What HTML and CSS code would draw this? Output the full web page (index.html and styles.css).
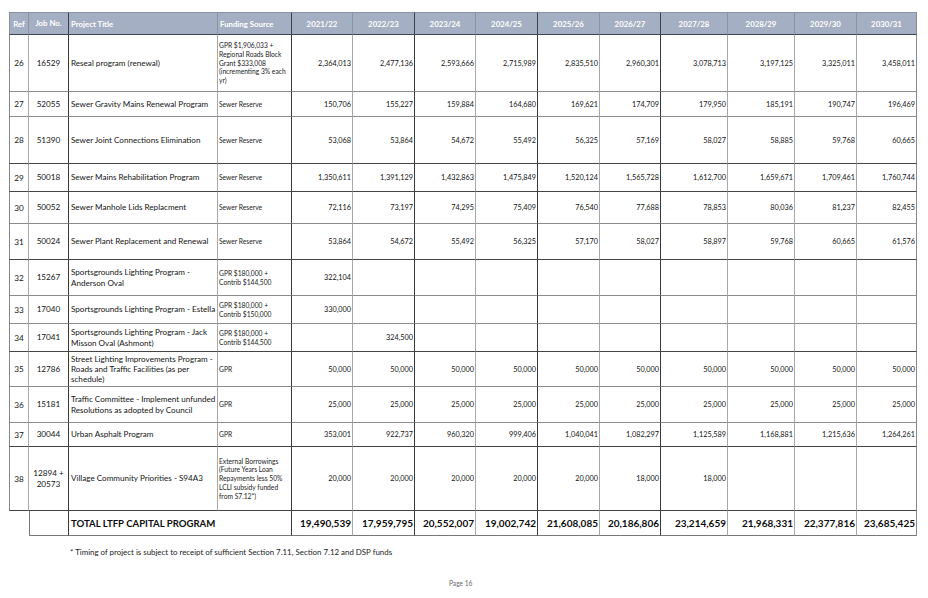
FILE: index.html
```html
<!DOCTYPE html>
<html>
<head>
<meta charset="utf-8">
<link rel="stylesheet" href="styles.css">
</head>
<body>
<div class="page">
<table class="ltfp">
<colgroup>
<col class="c-ref"><col class="c-job"><col class="c-title"><col class="c-fund">
<col class="c-y61"><col class="c-y62"><col class="c-y61"><col class="c-y62"><col class="c-y62"><col class="c-y61"><col class="c-y67"><col class="c-y67"><col class="c-y62"><col class="c-y60">
</colgroup>
<thead>
<tr class="hd">
<th class="ref">Ref</th><th class="job vd">Job No.</th><th class="tl">Project Title</th><th class="tl vd">Funding Source</th>
<th>2021/22</th><th class="vd">2022/23</th><th>2023/24</th><th class="vd">2024/25</th><th>2025/26</th><th class="vd">2026/27</th><th>2027/28</th><th>2028/29</th><th>2029/30</th><th class="last">2030/31</th>
</tr>
</thead>
<tbody>
<tr class="r26">
<td class="ref">26</td><td class="job vd">16529</td><td class="title">Reseal program (renewal)</td><td class="fund vd">GPR $1,906,033 + Regional Roads Block Grant $333,008 (incrementing 3% each yr)</td>
<td class="num">2,364,013</td><td class="num vd">2,477,136</td><td class="num">2,593,666</td><td class="num vd">2,715,989</td><td class="num">2,835,510</td><td class="num vd">2,960,301</td><td class="num">3,078,713</td><td class="num">3,197,125</td><td class="num">3,325,011</td><td class="num last">3,458,011</td>
</tr>
<tr class="r27">
<td class="ref">27</td><td class="job vd">52055</td><td class="title">Sewer Gravity Mains Renewal Program</td><td class="fund vd">Sewer Reserve</td>
<td class="num">150,706</td><td class="num vd">155,227</td><td class="num">159,884</td><td class="num vd">164,680</td><td class="num">169,621</td><td class="num vd">174,709</td><td class="num">179,950</td><td class="num">185,191</td><td class="num">190,747</td><td class="num last">196,469</td>
</tr>
<tr class="r28 dk">
<td class="ref">28</td><td class="job vd">51390</td><td class="title">Sewer Joint Connections Elimination</td><td class="fund vd">Sewer Reserve</td>
<td class="num">53,068</td><td class="num vd">53,864</td><td class="num">54,672</td><td class="num vd">55,492</td><td class="num">56,325</td><td class="num vd">57,169</td><td class="num">58,027</td><td class="num">58,885</td><td class="num">59,768</td><td class="num last">60,665</td>
</tr>
<tr class="r29 dk">
<td class="ref">29</td><td class="job vd">50018</td><td class="title">Sewer Mains Rehabilitation Program</td><td class="fund vd">Sewer Reserve</td>
<td class="num">1,350,611</td><td class="num vd">1,391,129</td><td class="num">1,432,863</td><td class="num vd">1,475,849</td><td class="num">1,520,124</td><td class="num vd">1,565,728</td><td class="num">1,612,700</td><td class="num">1,659,671</td><td class="num">1,709,461</td><td class="num last">1,760,744</td>
</tr>
<tr class="r30">
<td class="ref">30</td><td class="job vd">50052</td><td class="title">Sewer Manhole Lids Replacment</td><td class="fund vd">Sewer Reserve</td>
<td class="num">72,116</td><td class="num vd">73,197</td><td class="num">74,295</td><td class="num vd">75,409</td><td class="num">76,540</td><td class="num vd">77,688</td><td class="num">78,853</td><td class="num">80,036</td><td class="num">81,237</td><td class="num last">82,455</td>
</tr>
<tr class="r31 dk">
<td class="ref">31</td><td class="job vd">50024</td><td class="title">Sewer Plant Replacement and Renewal</td><td class="fund vd">Sewer Reserve</td>
<td class="num">53,864</td><td class="num vd">54,672</td><td class="num">55,492</td><td class="num vd">56,325</td><td class="num">57,170</td><td class="num vd">58,027</td><td class="num">58,897</td><td class="num">59,768</td><td class="num">60,665</td><td class="num last">61,576</td>
</tr>
<tr class="r32">
<td class="ref">32</td><td class="job vd">15267</td><td class="title">Sportsgrounds Lighting Program - Anderson Oval</td><td class="fund vd">GPR $180,000 + Contrib $144,500</td>
<td class="num">322,104</td><td class="num vd"></td><td class="num"></td><td class="num vd"></td><td class="num"></td><td class="num vd"></td><td class="num"></td><td class="num"></td><td class="num"></td><td class="num last"></td>
</tr>
<tr class="r33">
<td class="ref">33</td><td class="job vd">17040</td><td class="title">Sportsgrounds Lighting Program - Estella</td><td class="fund vd">GPR $180,000 + Contrib $150,000</td>
<td class="num">330,000</td><td class="num vd"></td><td class="num"></td><td class="num vd"></td><td class="num"></td><td class="num vd"></td><td class="num"></td><td class="num"></td><td class="num"></td><td class="num last"></td>
</tr>
<tr class="r34 dk">
<td class="ref">34</td><td class="job vd">17041</td><td class="title">Sportsgrounds Lighting Program - Jack Misson Oval (Ashmont)</td><td class="fund vd">GPR $180,000 + Contrib $144,500</td>
<td class="num"></td><td class="num vd">324,500</td><td class="num"></td><td class="num vd"></td><td class="num"></td><td class="num vd"></td><td class="num"></td><td class="num"></td><td class="num"></td><td class="num last"></td>
</tr>
<tr class="r35">
<td class="ref">35</td><td class="job vd">12786</td><td class="title">Street Lighting Improvements Program - Roads and Traffic Facilities (as per schedule)</td><td class="fund vd">GPR</td>
<td class="num">50,000</td><td class="num vd">50,000</td><td class="num">50,000</td><td class="num vd">50,000</td><td class="num">50,000</td><td class="num vd">50,000</td><td class="num">50,000</td><td class="num">50,000</td><td class="num">50,000</td><td class="num last">50,000</td>
</tr>
<tr class="r36">
<td class="ref">36</td><td class="job vd">15181</td><td class="title">Traffic Committee - Implement unfunded Resolutions as adopted by Council</td><td class="fund vd">GPR</td>
<td class="num">25,000</td><td class="num vd">25,000</td><td class="num">25,000</td><td class="num vd">25,000</td><td class="num">25,000</td><td class="num vd">25,000</td><td class="num">25,000</td><td class="num">25,000</td><td class="num">25,000</td><td class="num last">25,000</td>
</tr>
<tr class="r37 dk">
<td class="ref">37</td><td class="job vd">30044</td><td class="title">Urban Asphalt Program</td><td class="fund vd">GPR</td>
<td class="num">353,001</td><td class="num vd">922,737</td><td class="num">960,320</td><td class="num vd">999,406</td><td class="num">1,040,041</td><td class="num vd">1,082,297</td><td class="num">1,125,589</td><td class="num">1,168,881</td><td class="num">1,215,636</td><td class="num last">1,264,261</td>
</tr>
<tr class="r38 dk">
<td class="ref">38</td><td class="job vd">12894 +<br>20573</td><td class="title">Village Community Priorities - S94A3</td><td class="fund vd">External Borrowings (Future Years Loan Repayments less 50% LCLI subsidy funded from S7.12*)</td>
<td class="num">20,000</td><td class="num vd">20,000</td><td class="num">20,000</td><td class="num vd">20,000</td><td class="num">20,000</td><td class="num vd">18,000</td><td class="num">18,000</td><td class="num"></td><td class="num"></td><td class="num last"></td>
</tr>
<tr class="total">
<td class="blank"></td><td class="job vd first"></td><td class="ttl-label" colspan="2">TOTAL LTFP CAPITAL PROGRAM</td>
<td class="tnum">19,490,539</td><td class="tnum vd">17,959,795</td><td class="tnum">20,552,007</td><td class="tnum vd">19,002,742</td><td class="tnum">21,608,085</td><td class="tnum vd">20,186,806</td><td class="tnum">23,214,659</td><td class="tnum">21,968,331</td><td class="tnum">22,377,816</td><td class="tnum last">23,685,425</td>
</tr>
</tbody>
</table>
<p class="note">* Timing of project is subject to receipt of sufficient Section 7.11, Section 7.12 and DSP funds</p>
<p class="pageno">Page 16</p>
</div>
</body>
</html>
```

FILE: styles.css
```css
html, body {
  margin: 0;
  padding: 0;
  background: #ffffff;
}

.page {
  width: 928px;
  height: 598px;
  padding: 12px 0 0 9px;
  box-sizing: border-box;
  font-family: Lato, "Open Sans", "Liberation Sans", sans-serif;
  color: #141414;
}

.ltfp {
  table-layout: fixed;
  border-collapse: separate;
  border-spacing: 0;
  width: 908px;
}

.c-ref { width: 20px; }
.c-job { width: 40px; }
.c-title { width: 149px; }
.c-fund { width: 74px; }
.c-y60 { width: 60px; }
.c-y61 { width: 61px; }
.c-y62 { width: 62px; }
.c-y67 { width: 67px; }

.ltfp th,
.ltfp td {
  border-right: 1px solid #a8a8a8;
  border-bottom: 1px solid #8c8c8c;
  padding: 0;
  vertical-align: middle;
  box-sizing: border-box;
  overflow: hidden;
}

.ltfp .ref {
  border-left: 1px solid #888;
  text-align: center;
}

.ltfp .vd {
  border-right-color: #3a3a3a;
}

.ltfp .last {
  border-right-color: #8a8a8a;
}

.ltfp tr.dk td {
  border-bottom-color: #444;
}

/* header */
.hd {
  height: 23px;
}

.hd th {
  background: #a5afc3;
  color: #ffffff;
  font-size: 7.8px;
  font-weight: 700;
  text-align: center;
  white-space: nowrap;
  border-top: 1px solid #8b93a3;
  border-bottom: 1px solid #3f4550;
  border-right-color: #8b93a3;
}

.hd th.vd {
  border-right-color: #3c424c;
}

.hd th.ref {
  border-left-color: #8b93a3;
}

.hd th.tl {
  text-align: left;
  padding-left: 2px;
}

/* body cells */
.job {
  text-align: center;
  font-size: 8.2px;
  line-height: 10.5px;
}

td.ref {
  font-size: 8.2px;
}

.title {
  font-size: 8.1px;
  line-height: 10.3px;
  padding-left: 2px !important;
  padding-right: 0 !important;
}

.fund {
  font-size: 6.7px;
  line-height: 8.8px;
  padding-left: 1px !important;
  padding-right: 1px !important;
  color: #222;
}

.num {
  text-align: right;
  font-size: 7.3px;
  padding-right: 1px !important;
}

.r26 { height: 57px; }
.r27 { height: 25px; }
.r28 { height: 47px; }
.r29 { height: 28px; }
.r30 { height: 32px; }
.r31 { height: 36px; }
.r32 { height: 36px; }
.r33 { height: 28px; }
.r34 { height: 28px; }
.r35 { height: 35px; }
.r36 { height: 36px; }
.r37 { height: 24px; }
.r38 { height: 64px; }

/* total row */
.total {
  height: 25px;
}

.ltfp .total td.blank {
  border: none;
}

.ltfp .total td.first {
  border-left: 1px solid #777;
}

.ltfp .total td {
  border-bottom-color: #777;
}

.ttl-label {
  font-size: 9.6px;
  font-weight: 700;
  padding-left: 2px !important;
  color: #0c0c0c;
  border-right-color: #3a3a3a !important;
}

.tnum {
  text-align: right;
  font-size: 10px;
  font-weight: 700;
  padding-right: 1px !important;
  color: #0c0c0c;
}

.note {
  margin: 11px 0 0 61px;
  font-size: 7.9px;
  color: #1a1a1a;
}

.pageno {
  margin: 22px 0 0 440px;
  font-size: 6.6px;
  color: #666;
}
```
